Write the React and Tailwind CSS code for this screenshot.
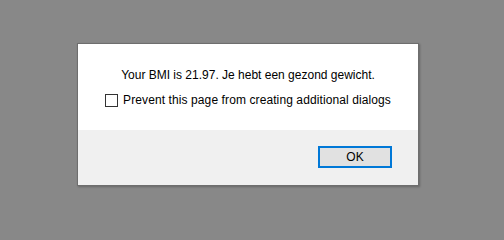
import React, { useState } from 'react';

export default function App() {
    const [checked, setChecked] = useState(false);

    return (
        <div className="w-[504px] h-screen min-h-[221px] bg-[#888888] pt-[43px] pl-[77px]" style={{ fontFamily: '"Liberation Sans", Arial, sans-serif' }}>
            <div className="w-[342px] h-[143px] border border-[#6e6e6e] bg-white flex flex-col shadow-[1px_1px_2px_rgba(0,0,0,0.25)]">
                <div className="flex flex-col items-center pt-[23px] h-[86px] text-[12px] text-black">
                    <p className="leading-[16px]">Your BMI is 21.97. Je hebt een gezond gewicht.</p>
                    <label className="mt-[9px] flex items-center gap-[5px] leading-[16px] tracking-[0.1px] cursor-default">
                        <span
                            onClick={() => setChecked(!checked)}
                            className="w-[13px] h-[13px] border border-[#333333] bg-white flex items-center justify-center text-[10px] leading-none"
                        >
                            {checked ? '✓' : ''}
                        </span>
                        <span onClick={() => setChecked(!checked)}>Prevent this page from creating additional dialogs</span>
                    </label>
                </div>
                <div className="flex-1 bg-[#f0f0f0] flex justify-end items-start pt-[16px] pr-[26px]">
                    <button className="w-[74px] h-[22px] border-2 border-[#0078d7] bg-[#e1e1e1] text-[12px] text-black leading-none">
                        OK
                    </button>
                </div>
            </div>
        </div>
    );
}
